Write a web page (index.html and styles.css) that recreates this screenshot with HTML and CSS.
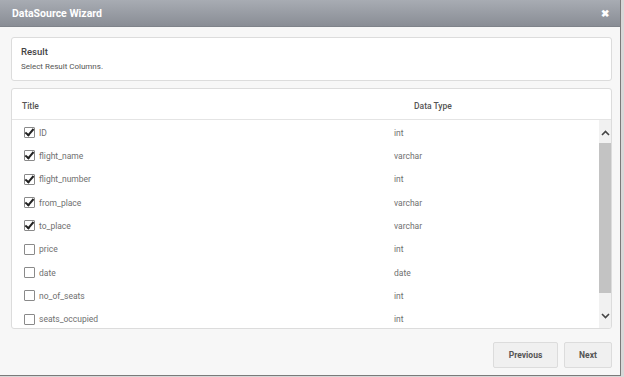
FILE: index.html
```html
<!DOCTYPE html>
<html lang="en">
<head>
  <meta charset="UTF-8" />
  <title>DataSource Wizard</title>
  <link rel="stylesheet" href="styles.css">
</head>
<body>
  <div class="dialog">
    <div class="dialog-header">
      <span class="dialog-title">DataSource Wizard</span>
      <span class="close">&#10006;</span>
    </div>

    <div class="dialog-body">
      <div class="panel result">
        <div class="result-title">Result</div>
        <div class="result-sub">Select Result Columns.</div>
      </div>

      <div class="panel grid">
        <div class="grid-head">
          <div class="col-title">Title</div>
          <div class="col-type">Data Type</div>
        </div>
        <div class="grid-body">
          <div class="rows">
            <div class="row"><span class="check on"></span><span class="name">ID</span><span class="type">int</span></div>
            <div class="row"><span class="check on"></span><span class="name">flight_name</span><span class="type">varchar</span></div>
            <div class="row"><span class="check on"></span><span class="name">flight_number</span><span class="type">int</span></div>
            <div class="row"><span class="check on"></span><span class="name">from_place</span><span class="type">varchar</span></div>
            <div class="row"><span class="check on"></span><span class="name">to_place</span><span class="type">varchar</span></div>
            <div class="row"><span class="check"></span><span class="name">price</span><span class="type">int</span></div>
            <div class="row"><span class="check"></span><span class="name">date</span><span class="type">date</span></div>
            <div class="row"><span class="check"></span><span class="name">no_of_seats</span><span class="type">int</span></div>
            <div class="row"><span class="check"></span><span class="name">seats_occupied</span><span class="type">int</span></div>
          </div>
          <div class="scrollbar">
            <svg class="arrow" width="9" height="6" viewBox="0 0 9 6"><path d="M1 5 L4.5 1.5 L8 5" fill="none" stroke="#444" stroke-width="1.6"/></svg>
            <div class="track"><div class="thumb"></div></div>
            <svg class="arrow" width="9" height="6" viewBox="0 0 9 6"><path d="M1 1 L4.5 4.5 L8 1" fill="none" stroke="#444" stroke-width="1.6"/></svg>
          </div>
        </div>
      </div>

      <div class="actions">
        <button class="btn btn-prev">Previous</button>
        <button class="btn btn-next">Next</button>
      </div>
    </div>
  </div>
</body>
</html>
```

FILE: styles.css
```css
html, body {
  margin: 0;
  padding: 0;
}
body {
  font-family: Roboto, "Liberation Sans", sans-serif;
  background: #d8d8d8;
  width: 624px;
  height: 377px;
  overflow: hidden;
}
.dialog {
  width: 620px;
  height: 375px;
  background: #f7f7f7;
  border-right: 1px solid #7a7a7a;
  border-bottom: 1px solid #7a7a7a;
  display: flex;
  flex-direction: column;
}
.dialog-header {
  height: 26px;
  flex: none;
  background: linear-gradient(to bottom, #a8acb3, #898d95);
  border-bottom: 1px solid #7f838a;
  display: flex;
  align-items: center;
  justify-content: space-between;
  padding: 0 11px 0 12px;
}
.dialog-title {
  color: #fff;
  font-weight: bold;
  font-size: 10.5px;
}
.close {
  color: #fff;
  font-size: 10px;
  font-weight: bold;
}
.dialog-body {
  flex: 1;
  display: flex;
  flex-direction: column;
  padding: 10px 8px 0 11px;
}
.panel {
  background: #fff;
  border: 1px solid #dcdcdc;
  border-radius: 3px;
}
.result {
  height: 44px;
  box-sizing: border-box;
  padding: 8px 9px 0;
}
.result-title {
  font-size: 9.5px;
  font-weight: 500;
  color: #444;
  line-height: 12px;
}
.result-sub {
  font-size: 8px;
  color: #555;
  margin-top: 4px;
}
.grid {
  margin-top: 7px;
  height: 241px;
  box-sizing: border-box;
  display: flex;
  flex-direction: column;
  overflow: hidden;
}
.grid-head {
  height: 31px;
  flex: none;
  box-sizing: border-box;
  padding-top: 3px;
  border-bottom: 1px solid #e4e4e4;
  display: flex;
  align-items: center;
  font-size: 8.5px;
  font-weight: 500;
  color: #555;
}
.col-title {
  width: 392px;
  padding-left: 10px;
  box-sizing: border-box;
}
.col-type {
  padding-left: 10px;
}
.grid-body {
  flex: 1;
  display: flex;
  overflow: hidden;
}
.rows {
  flex: 1;
  overflow: hidden;
  padding-top: 1px;
}
.row {
  height: 23.33px;
  display: flex;
  align-items: center;
  font-size: 8.5px;
  color: #6f6f6f;
}
.check {
  width: 9px;
  height: 9px;
  border: 1px solid #8a8a8a;
  border-radius: 1px;
  margin-left: 12px;
  margin-right: 4px;
  position: relative;
  flex: none;
}
.check.on::after {
  content: "";
  position: absolute;
  left: 2px;
  top: -1px;
  width: 3px;
  height: 7px;
  border-right: 2px solid #222;
  border-bottom: 2px solid #222;
  transform: rotate(40deg);
}
.name {
  width: 355px;
}
.type {
  flex: 1;
}
.scrollbar {
  width: 12px;
  flex: none;
  background: #f1f1f1;
  display: flex;
  flex-direction: column;
  align-items: center;
}
.arrow {
  flex: none;
  margin: 10px 0 7px;
}
.scrollbar .arrow:last-child {
  margin: 6px 0 9px;
}
.track {
  flex: 1;
  width: 100%;
}
.thumb {
  height: 150px;
  background: #c3c3c3;
}
.actions {
  display: flex;
  justify-content: flex-end;
  gap: 6px;
  margin-top: 13px;
}
.btn {
  height: 26px;
  font-family: Roboto, "Liberation Sans", sans-serif;
  font-size: 8.5px;
  font-weight: bold;
  color: #555;
  background: #f0f0f0;
  border: 1px solid #dcdcdc;
  border-radius: 2px;
}
.btn-prev {
  width: 65px;
}
.btn-next {
  width: 48px;
}
```
